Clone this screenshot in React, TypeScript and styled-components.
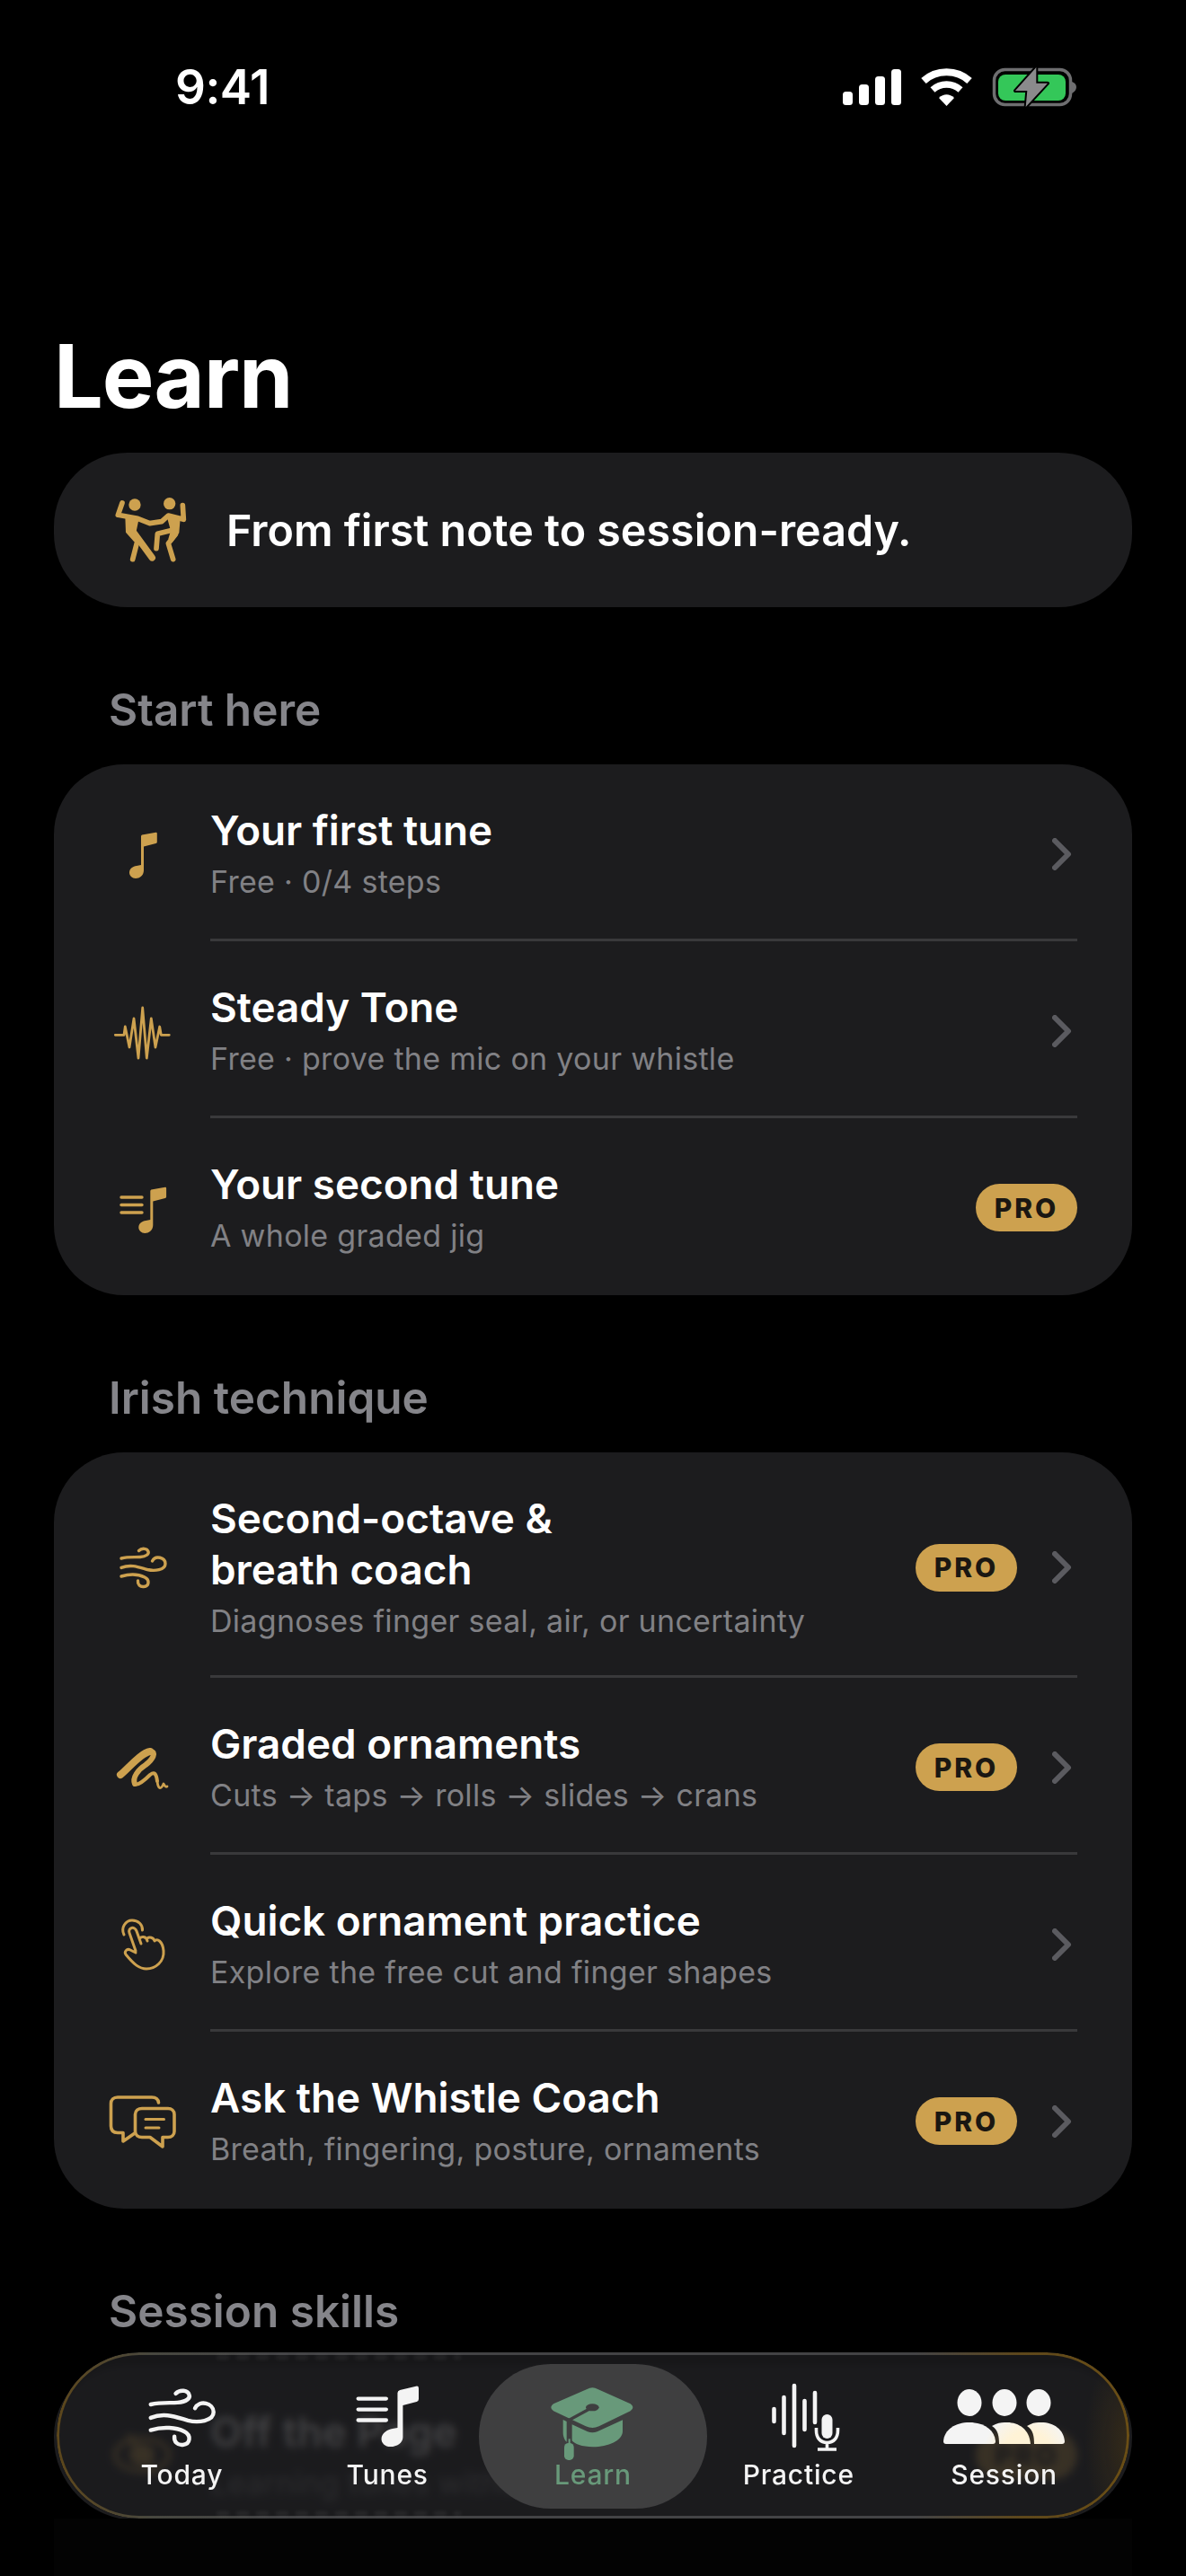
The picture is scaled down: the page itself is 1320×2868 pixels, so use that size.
import React from 'react'
import styled, {createGlobalStyle} from 'styled-components'

const GOLD = '#cda14f'
const CARD = '#1c1c1e'
const GREEN = '#68997a'
const WHITE = '#f4f4f4'

const Global = createGlobalStyle`
  html, body { margin: 0; padding: 0; background: #000; }
  body { font-family: "Inter", "Noto Sans", sans-serif; color: #fff; }
`

const NOTE = 'M-1 -19 Q-1 -20 0 -20.5 L15.5 -23.2 Q16.8 -23.4 16.8 -22 V-12.5 Q16.8 -11.4 15.5 -11 L2 -7.5 V19 C2 25 -3 28 -7 28 C-11 28 -14 25 -14 21.5 C-14 17 -10 14.5 -6 14 L-1 13 Z'

function Line({d, w = 3.4}: {d: string; w?: number}) {
  return <path d={d} fill="none" stroke="currentColor" strokeWidth={w} strokeLinecap="round" strokeLinejoin="round" />
}

const WindPaths = ({w = 3.4}: {w?: number}) => (
  <>
    <Line w={w} d="M-23 -8 C-15 -10 -8 -9 -2 -9.5 C5 -10 8 -13 7 -15.5 C6 -19 0 -20 -3.5 -16.5" />
    <Line w={w} d="M-23 2.4 C-12 -2 -3 2 6 4.5 C14 6.5 26 5 26 -2 C26 -9 15 -12 11.5 -5" />
    <Line w={w} d="M-23 12 C-13 9 -3 10 3 13 C9 16 8 23 2 23.5 C-2 24 -5 21 -4.5 17" />
  </>
)

const icons: Record<string, React.ReactNode> = {
  note: <path d={NOTE} fill="currentColor" />,
  wave: (
    <>
      <Line w={2.8} d="M-29.7 5.3 H-20 L-18.7 -4 L-14 19 L-9 -13 L-4 31 L.7 -25 L5.3 31 L10.3 -13 L15 19 L19.7 -4 L21.3 5.3 H30.3" />
    </>
  ),
  list: (
    <>
      <Line w={3.4} d="M-23 -11 H0" />
      <Line w={3.4} d="M-23 -2.5 H0" />
      <Line w={3.4} d="M-23 6 H0" />
      <path d={NOTE} fill="currentColor" transform="translate(10.3 1)" />
    </>
  ),
  wind: <WindPaths />,
  squiggle: (
    <>
      <Line w={8} d="M-24 9 C-15 2 -2 -15 9 -17" />
      <Line w={6} d="M9 -17 C17 -17 12 -8 4 -2 C-4 3 -11 12 -8 19" />
      <Line w={4} d="M-8 19 C-5 22 4 14 9 9 C14 5 16 8 17 16" />
      <Line w={2.8} d="M17 16 C18 25 21 26 24 19 C26 22 26 23 28 22" />
    </>
  ),
  hand: (
    <>
      <Line w={3} d="M-20 -10 C-24 -18 -18 -26 -11 -26 C-4 -26 1 -21 .5 -15" />
      <Line w={3} d="M-7 8 L-14 -12 C-16 -18 -8 -20 -6 -14 L-1 0 M-2 -6 C-2 -8 5 -9 6 -3 M6 -6 C8 -8 13 -7 14 -3 C17 -6 23 -3 24 8 C25 20 15 28 5 28 C-3 28 -9 23 -18 12 C-20 9 -17 5 -13 7 L-7 10" />
    </>
  ),
  chat: (
    <>
      <Line w={3.6} d="M18.5 -20 C18 -24 15 -26 11 -26 H-27 C-32 -26 -34.5 -23 -34.5 -19 V6 C-34.5 11 -32 13.5 -27 13.5 H-21 V23 L-8 14" />
      <Line w={3.6} d="M0 -13.5 H29 C33 -13.5 36 -11 36 -7 V12 C36 16 33 18.5 29 18.5 H23 V29 L9 18.5 H0 C-4 18.5 -7.5 16 -7.5 12 V-7 C-7.5 -11 -4 -13.5 0 -13.5Z" />
      <Line w={3} d="M4 -1.5 H24.5" />
      <Line w={3} d="M4 8 H19" />
    </>
  ),
  noSheet: (
    <>
      <ellipse cx="0" cy="0" rx="30" ry="18" fill="none" stroke="currentColor" strokeWidth="5" />
      <Line w={6} d="M-14 -20 L14 20" />
      <ellipse cx="0" cy="0" rx="14" ry="12" fill="currentColor" />
    </>
  ),
}

function RowIcon({name}: {name: string}) {
  return <IconBox viewBox="-36 -36 72 72">{icons[name]}</IconBox>
}

function Dancers() {
  return (
    <DancerBox viewBox="0 0 330 270">
      <circle cx="120" cy="66" r="20" />
      <circle cx="236" cy="62" r="20" />
      <g fill="none" strokeLinecap="round" strokeLinejoin="round">
        <path d="M78 60 L64 100 L130 112 L170 128 L210 122 L232 102 L283 115 L280 68" strokeWidth="17" />
        <path d="M110 150 L178 243" strokeWidth="22" />
        <path d="M128 190 L113 248" strokeWidth="17" />
        <path d="M248 150 L196 163 L192 212" strokeWidth="17" />
        <path d="M256 165 L232 195 L248 248" strokeWidth="17" />
      </g>
      <path d="M88 105 L134 112 L124 160 L136 190 L118 190 L90 158 Z" />
      <path d="M225 98 L272 112 L268 160 L245 192 L232 180 L240 152 Z" />
    </DancerBox>
  )
}

function Chevron() {
  return (
    <ChevronBox viewBox="0 0 22 36">
      <path d="M3 3 L18 18 L3 33" fill="none" stroke="#5b5b60" strokeWidth="6" strokeLinecap="round" strokeLinejoin="round" />
    </ChevronBox>
  )
}

function SignalIcon() {
  return (
    <svg width="65" height="40" viewBox="0 0 65 40" fill="#fff">
      <rect x="0" y="25" width="11" height="15" rx="3.5" />
      <rect x="18" y="17" width="11" height="23" rx="3.5" />
      <rect x="36" y="8" width="11" height="32" rx="3.5" />
      <rect x="54" y="0" width="11" height="40" rx="3.5" />
    </svg>
  )
}

function WifiIcon() {
  return (
    <svg width="57" height="42" viewBox="0 0 57 42" fill="none" stroke="#fff">
      <path d="M3 14 C17 1 40 1 54 14" strokeWidth="8" />
      <path d="M13 24 C22 16 35 16 44 24" strokeWidth="7.5" />
      <path d="M20 33 L28.5 42 L37 33 C32 28 25 28 20 33Z" fill="#fff" strokeWidth="0" />
    </svg>
  )
}

function BatteryIcon() {
  return (
    <svg width="94" height="46" viewBox="0 0 94 46">
      <rect x="2.5" y="3.5" width="85" height="39" rx="12" fill="none" stroke="#6e6e70" strokeWidth="3.5" />
      <rect x="7" y="9" width="75" height="29" rx="8" fill="#34c759" />
      <path d="M89 17 C92 18 94 20 94 23 C94 26 92 28 89 30 Z" fill="#6e6e70" />
      <path d="M49.3 1 L26 27 H39.3 L37.7 45 L62 18.7 H49.3 Z" fill="#8a8a8c" stroke="#000" strokeWidth="4" strokeLinejoin="round" paintOrder="stroke" />
    </svg>
  )
}

function TodayIcon() {
  return (
    <TabSvg $w={80} viewBox="-27 -22 56 48">
      <WindPaths w={3.1} />
    </TabSvg>
  )
}

function TunesIcon() {
  return (
    <TabSvg $w={73} viewBox="1005 140 220 215">
      <path d="M1016 187 H1110 M1016 223 H1110 M1016 259 H1110" stroke="currentColor" strokeWidth="13" strokeLinecap="round" fill="none" />
      <path d="M1148 168 Q1148 160 1156 158 L1210 145 Q1219 143 1219 152 V188 Q1219 195 1212 197 L1166 209 V316 C1166 335 1145 348 1125 348 C1105 348 1094 335 1094 322 C1094 302 1115 290 1135 287 L1148 285 Z" fill="currentColor" />
    </TabSvg>
  )
}

function LearnIcon() {
  return (
    <TabSvg $w={100} viewBox="240 68 300 260">
      <path d="M370 104 Q388 94 406 104 L515 153 Q532 165 515 177 L410 228 Q388 238 366 228 L258 177 Q241 165 258 153 Z" fill="currentColor" />
      <path d="M388 165 L308 208 V282" fill="none" stroke="#3f3f40" strokeWidth="10" strokeLinecap="round" />
      <ellipse cx="388" cy="165" rx="22" ry="12" fill="#3f3f40" />
      <path d="M320 222 L372 246 Q388 252 404 246 L489 207 V245 C489 275 440 297 390 297 C352 297 328 286 320 276 Z" fill="currentColor" />
      <path d="M290 206 L302 212 V280 C296 276 290 262 290 250 Z" fill="currentColor" />
      <rect x="308" y="270" width="6" height="20" fill="currentColor" />
      <rect x="294" y="284" width="32" height="57" rx="14" fill="currentColor" />
    </TabSvg>
  )
}

function PracticeIcon() {
  return (
    <TabSvg $w={78} viewBox="849 2654 78 78">
      <path d="M860.5 2684 V2698 M871.5 2671 V2711 M883 2658 V2725 M894.5 2675 V2707 M906 2666 V2699" stroke="currentColor" strokeWidth="4.6" strokeLinecap="round" fill="none" />
      <rect x="913.5" y="2690" width="12" height="27" rx="6" fill="currentColor" />
      <path d="M907.5 2705 V2708 C907.5 2716 912 2721.5 919.5 2721.5 C927 2721.5 931.5 2716 931.5 2708 V2705 M919.5 2721 V2728 M909 2729 H930" stroke="currentColor" strokeWidth="3.6" fill="none" />
    </TabSvg>
  )
}

function SessionIcon() {
  return (
    <TabSvg $w={136} viewBox="1049 2658 136 66">
      <defs>
        <radialGradient id="warm" gradientUnits="userSpaceOnUse" cx="1142" cy="2735" r="50">
          <stop offset="0.55" stopColor="#fff3d6" />
          <stop offset="1" stopColor={WHITE} />
        </radialGradient>
      </defs>
      <g fill="url(#warm)">
        <ellipse cx="1078" cy="2675" rx="13.5" ry="15" />
        <ellipse cx="1117" cy="2675" rx="13.5" ry="15" />
        <ellipse cx="1155" cy="2675" rx="13.5" ry="15" />
        <path d="M1049 2718 C1050 2705 1062 2697 1078 2697 C1094 2697 1106 2705 1107 2718 Q1107 2721 1104 2721 H1052 Q1049 2721 1049 2718Z" />
        <path d="M1107 2699 C1112 2697 1116 2697 1120 2697 C1133 2697 1145 2705 1146 2721 H1111 C1111 2713 1110 2705 1103 2701Z" />
        <path d="M1146 2699 C1150 2697 1154 2697 1158 2697 C1172 2697 1183 2705 1184 2718 Q1184 2721 1181 2721 H1150 C1150 2713 1149 2705 1142 2701Z" />
      </g>
    </TabSvg>
  )
}

type Item = {icon: string; title: string; sub: string; pro?: boolean; chevron?: boolean}

const startHere: Item[] = [
  {icon: 'note', title: 'Your first tune', sub: 'Free · 0/4 steps', chevron: true},
  {icon: 'wave', title: 'Steady Tone', sub: 'Free · prove the mic on your whistle', chevron: true},
  {icon: 'list', title: 'Your second tune', sub: 'A whole graded jig', pro: true},
]

const technique: Item[] = [
  {icon: 'wind', title: 'Second-octave &\nbreath coach', sub: 'Diagnoses finger seal, air, or uncertainty', pro: true, chevron: true},
  {icon: 'squiggle', title: 'Graded ornaments', sub: 'Cuts → taps → rolls → slides → crans', pro: true, chevron: true},
  {icon: 'hand', title: 'Quick ornament practice', sub: 'Explore the free cut and finger shapes', chevron: true},
  {icon: 'chat', title: 'Ask the Whistle Coach', sub: 'Breath, fingering, posture, ornaments', pro: true, chevron: true},
]

function Row({item, last}: {item: Item; last: boolean}) {
  return (
    <RowWrap>
      <IconSlot><RowIcon name={item.icon} /></IconSlot>
      <RowBody $last={last} $tight={item.title.includes('\n')}>
        <RowText>
          <RowTitle>{item.title}</RowTitle>
          <RowSub>{item.sub}</RowSub>
        </RowText>
        {item.pro && <ProBadge>PRO</ProBadge>}
        {item.chevron && <Chevron />}
      </RowBody>
    </RowWrap>
  )
}

const tabs = [
  {label: 'Today', icon: <TodayIcon />},
  {label: 'Tunes', icon: <TunesIcon />},
  {label: 'Learn', icon: <LearnIcon />, active: true},
  {label: 'Practice', icon: <PracticeIcon />},
  {label: 'Session', icon: <SessionIcon />},
]

export default function App() {
  return (
    <Screen>
      <Global />
      <StatusBar>
        <Clock>9:41</Clock>
        <StatusIcons>
          <SignalIcon />
          <WifiIcon />
          <BatteryIcon />
        </StatusIcons>
      </StatusBar>

      <PageTitle>Learn</PageTitle>

      <Banner>
        <Dancers />
        <BannerText>From first note to session-ready.</BannerText>
      </Banner>

      <SectionLabel>Start here</SectionLabel>
      <Card>
        {startHere.map((item, i) => (
          <Row key={item.title} item={item} last={i === startHere.length - 1} />
        ))}
      </Card>

      <SectionLabel>Irish technique</SectionLabel>
      <Card>
        {technique.map((item, i) => (
          <Row key={item.title} item={item} last={i === technique.length - 1} />
        ))}
      </Card>

      <SectionLabel>Session skills</SectionLabel>
      <ClippedCard>
        <RowWrap>
          <IconSlot><RowIcon name="noSheet" /></IconSlot>
          <RowBody $last>
            <RowText>
              <RowTitle>Off the Page</RowTitle>
              <RowSub>Learning tunes without notation</RowSub>
            </RowText>
            <ProBadge>PRO</ProBadge>
          </RowBody>
        </RowWrap>
      </ClippedCard>

      <BottomFade />
      <TabBar>
        <GlassEcho $top />
        <GlassEcho />
        {tabs.map(tab => (
          <Tab key={tab.label} $active={tab.active}>
            {tab.active && <ActivePill />}
            <TabIcon>{tab.icon}</TabIcon>
            <TabLabel>{tab.label}</TabLabel>
          </Tab>
        ))}
      </TabBar>
    </Screen>
  )
}

const Screen = styled.div`
  position: relative;
  width: 1320px;
  height: 2868px;
  padding: 0 60px;
  box-sizing: border-box;
  overflow: hidden;
  background: #000;
`
const StatusBar = styled.div`
  display: flex;
  align-items: center;
  justify-content: space-between;
  height: 56px;
  padding: 69px 62px 0 135px;
`
const Clock = styled.div`
  font-size: 53px;
  font-weight: 600;
  line-height: 56px;
  letter-spacing: -0.5px;
`
const StatusIcons = styled.div`
  display: flex;
  align-items: center;
  gap: 22px;
`
const PageTitle = styled.h1`
  margin: 234px 0 25px 0;
  font-size: 97px;
  font-weight: 700;
  line-height: 120px;
  letter-spacing: -1px;
`
const Banner = styled.div`
  display: flex;
  align-items: center;
  gap: 32px;
  height: 172px;
  padding-left: 50px;
  background: ${CARD};
  border-radius: 82px;
`
const DancerBox = styled.svg`
  flex: none;
  width: 110px;
  height: 90px;
  margin-bottom: 10px;
  fill: ${GOLD};
  stroke: ${GOLD};
  stroke-width: 0;
  overflow: visible;
`
const BannerText = styled.div`
  padding-top: 2px;
  font-size: 48.4px;
  font-weight: 600;
  line-height: 60px;
`
const SectionLabel = styled.div`
  margin: 84px 0 31px 61px;
  font-size: 49.5px;
  font-weight: 600;
  line-height: 60px;
  color: #85858a;
`
const Card = styled.div`
  background: ${CARD};
  border-radius: 78px;
`
const ClippedCard = styled(Card)`
  height: 172px;
  overflow: hidden;
  border-radius: 78px 78px 92px 92px;
`
const RowWrap = styled.div`
  display: flex;
  align-items: stretch;
  padding: 0 61px 0 62px;
`
const IconSlot = styled.div`
  flex: none;
  display: flex;
  align-items: center;
  justify-content: center;
  width: 72px;
  margin-right: 40px;
`
const IconBox = styled.svg`
  width: 72px;
  height: 72px;
  color: ${GOLD};
  overflow: visible;
`
const RowBody = styled.div<{$last: boolean; $tight?: boolean}>`
  flex: 1;
  display: flex;
  align-items: center;
  padding: 45px 6px ${p => (p.$tight ? 37 : 40)}px 0;
  border-bottom: 3px solid ${p => (p.$last ? 'transparent' : '#39393b')};
`
const RowText = styled.div`
  flex: 1;
  min-width: 0;
`
const RowTitle = styled.div`
  font-size: 45.8px;
  font-weight: 600;
  line-height: 57px;
  color: #fff;
  white-space: pre-line;
`
const RowSub = styled.div`
  margin-top: 5px;
  font-size: 34px;
  line-height: 47px;
  letter-spacing: 0.3px;
  color: #818185;
`
const ProBadge = styled.span`
  flex: none;
  display: flex;
  align-items: center;
  justify-content: center;
  width: 113px;
  height: 53px;
  margin-right: -6px;
  border-radius: 27px;
  background: ${GOLD};
  color: #1a1712;
  font-size: 30px;
  font-weight: 800;
  letter-spacing: 3px;

  & + svg {
    margin-left: 45px;
  }
`
const ChevronBox = styled.svg`
  flex: none;
  width: 22px;
  height: 36px;
`
const BottomFade = styled.div`
  position: absolute;
  left: 60px;
  right: 60px;
  top: 2804px;
  bottom: 0;
  background: #030303;
`
const TabBar = styled.nav`
  position: absolute;
  left: 63px;
  top: 2619px;
  box-sizing: border-box;
  display: grid;
  grid-template-columns: repeat(5, 1fr);
  width: 1194px;
  height: 185px;
  padding: 3px 25px;
  border-radius: 92px;
  overflow: hidden;
  background:
    radial-gradient(50px 110px at 100% 55%, rgba(110, 78, 18, 0.3), transparent),
    rgba(28, 28, 30, 0.84);
  backdrop-filter: blur(4px);

  &::before {
    content: '';
    position: absolute;
    inset: 0;
    padding: 3px;
    border-radius: inherit;
    background: linear-gradient(90deg, #5d471b 0, #47473f 9%, #434345 20%, #434345 80%, #5d471b 90%, #6a4e15 100%);
    mask: linear-gradient(#000 0 0) content-box exclude, linear-gradient(#000 0 0);
  }
`
const GlassEcho = styled.div<{$top?: boolean}>`
  position: absolute;
  left: 178px;
  ${p => (p.$top ? 'top: 3px;' : 'bottom: 3px;')}
  width: 272px;
  height: 5px;
  background: repeating-linear-gradient(90deg, rgba(255, 255, 255, 0.06) 0 14px, transparent 14px 22px);
  filter: blur(2px);
`
const Tab = styled.div<{$active?: boolean}>`
  position: relative;
  display: flex;
  flex-direction: column;
  align-items: center;
  padding-top: 27px;
  color: ${p => (p.$active ? GREEN : WHITE)};
`
const ActivePill = styled.div`
  position: absolute;
  top: 10px;
  bottom: 8px;
  left: -13px;
  right: -13px;
  border-radius: 80px;
  background: #3f3f40;
`
const TabIcon = styled.div`
  position: relative;
  display: flex;
  align-items: center;
  justify-content: center;
  height: 84px;
`
const TabSvg = styled.svg<{$w: number}>`
  width: ${p => p.$w}px;
  overflow: visible;
`
const TabLabel = styled.div`
  position: relative;
  margin-top: 3px;
  font-size: 30px;
  font-weight: 500;
  line-height: 38px;
  letter-spacing: 0.8px;
`
